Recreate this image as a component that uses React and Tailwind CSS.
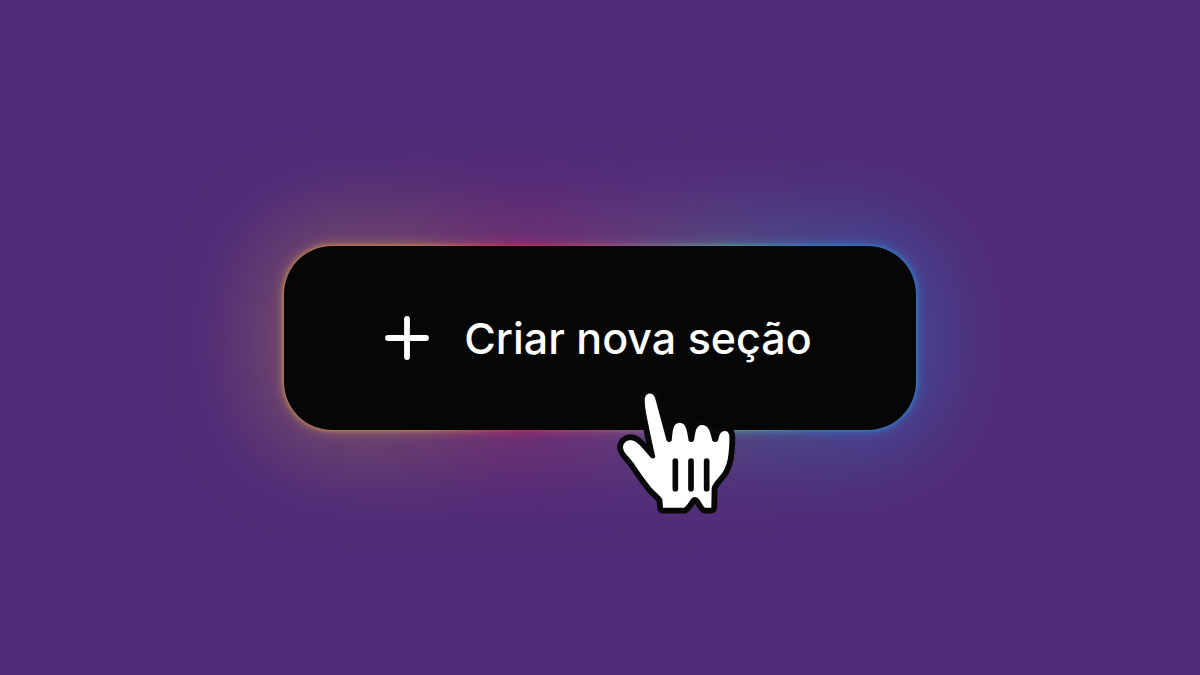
import React from "react";
import { clsx } from "clsx";

const GLOW =
  "absolute bg-[linear-gradient(90deg,#b98a52_0%,#b0805a_22%,#c42a66_38%,#a05a7c_50%,#589496_70%,#3480c4_84%,#2f7ed0_100%)]";
const EDGE =
  "absolute bg-[linear-gradient(90deg,#e0a848_0%,#d89a4c_22%,#e8245c_37%,#b06078_52%,#58b898_70%,#2c94d8_84%,#2c94e4_100%)]";

function PlusIcon() {
  return (
    <svg viewBox="0 0 48 48" className="size-12 shrink-0" fill="none" stroke="currentColor"
      strokeWidth="5.8" strokeLinecap="round" aria-hidden="true">
      <path d="M23 5v38M4 24h38" />
    </svg>
  );
}

function HandCursor({ className }) {
  const hand =
    "M134 62C134 34 161 34 166 56L200 182Q207 190 215 182C218 154 218 128 239 128C260 128 261 156 266 182Q274 190 282 182C286 160 286 135 307 135C328 135 332 162 337 182Q346 190 354 182C358 166 360 153 375 153C389 153 389 168 388 190C386 226 384 248 371 272C360 290 340 306 335 324L334 383H315C306 378 300 351 285 351C270 351 266 376 252 383H189L187 358C180 346 166 337 154 323C134 298 118 274 100 248C88 231 70 218 69 203C69 182 92 175 108 186C124 198 138 216 151 232Q160 240 166 230C162 212 154 178 146 138C141 112 135 88 134 62Z";
  return (
    <svg viewBox="0 0 450 435" className={className} aria-hidden="true">
      <path d={hand} fill="#080808" stroke="#080808" strokeWidth="35" strokeLinejoin="round" />
      <path d={hand} fill="#fff" />
      <path d="M226 243V326M273 243V326M320 243V326" fill="none" stroke="#080808"
        strokeWidth="17" strokeLinecap="round" />
    </svg>
  );
}

export default function App() {
  return (
    <main className="flex min-h-screen items-center justify-center overflow-hidden bg-[#502b77] font-['Inter',sans-serif]">
      <div className="relative">
        <div className={clsx(GLOW, "-inset-6 rounded-[72px] opacity-40 blur-[44px]")} />
        <div className={clsx(EDGE, "-inset-px rounded-[49px] opacity-50 blur-[6px]")} />
        <div className={clsx(EDGE, "inset-0 rounded-[48px] opacity-90 blur-[2px]")} />
        <button
          type="button"
          className="relative flex items-center gap-8 rounded-[48px] bg-[#060606] py-16 pr-26 pl-25 text-[43px] leading-14 font-medium text-white"
        >
          <PlusIcon />
          <span>Criar nova seção</span>
        </button>
        <HandCursor className="pointer-events-none absolute top-[134px] left-1/2 w-[150px]" />
      </div>
    </main>
  );
}
